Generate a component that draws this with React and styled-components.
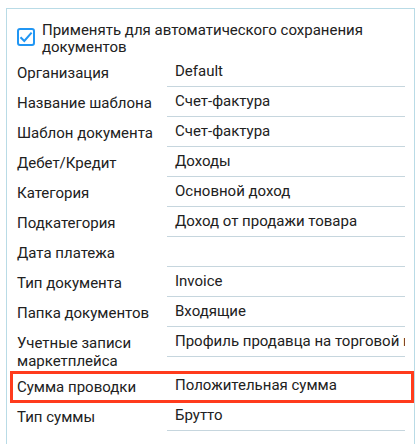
import React from "react";
import styled, {createGlobalStyle} from "styled-components";

const GlobalStyle = createGlobalStyle`
    body {
        margin: 0;
        background: #fff;
        font-family: Roboto, "Noto Sans", sans-serif;
        color: #212121;
    }
`;

const Panel = styled.div`
    box-sizing: border-box;
    margin: 8px 0 0 6px;
    width: 409px;
    height: 436px;
    border: 1px solid #b9dbe6;
    border-bottom: none;
    padding: 13px 0 0 0;
`;

const CheckRow = styled.label`
    display: flex;
    align-items: flex-start;
    gap: 7px;
    padding: 0 10px;
    font-size: 15px;
    line-height: 17px;
`;

const Box = styled.span`
    flex: none;
    width: 18px;
    height: 18px;
    margin-top: 6px;
    box-sizing: border-box;
    border: 2px solid #2196f3;
    border-radius: 3px;
    display: flex;
    align-items: center;
    justify-content: center;
`;

const Rows = styled.div`
    margin-top: 1px;
`;

const Row = styled.div`
    position: relative;
    display: flex;
    align-items: flex-start;
    padding: 0 9px 0 10px;
    font-size: 15px;
    line-height: 18px;

    ${(p) =>
        p.$marked &&
        `
        &::after {
            content: "";
            position: absolute;
            left: 3px;
            right: 0;
            top: 0;
            bottom: -2px;
            border: 3px solid #ff3b1c;
            pointer-events: none;
        }
    `}
`;

const Label = styled.div`
    flex: none;
    width: 150px;
    padding: 7px 0 1px;
`;

const Value = styled.div`
    flex: 1;
    min-width: 0;
    height: 30px;
    box-sizing: border-box;
    padding: 5px 0 0 8px;
    border-bottom: 1px solid #c6d6de;
    white-space: nowrap;
    overflow: hidden;
`;

const fields = [
    ["Организация", "Default"],
    ["Название шаблона", "Счет-фактура"],
    ["Шаблон документа", "Счет-фактура"],
    ["Дебет/Кредит", "Доходы"],
    ["Категория", "Основной доход"],
    ["Подкатегория", "Доход от продажи товара"],
    ["Дата платежа", ""],
    ["Тип документа", "Invoice"],
    ["Папка документов", "Входящие"],
    ["Учетные записи маркетплейса", "Профиль продавца на торговой площадке"],
    ["Сумма проводки", "Положительная сумма", true],
    ["Тип суммы", "Брутто"],
];

export default function App() {
    return (
        <>
            <GlobalStyle />
            <Panel>
                <CheckRow>
                    <Box>
                        <svg width="14" height="14" viewBox="0 0 14 14">
                            <path d="M1.5 7.2 L5.3 11 L12.6 2.6" fill="none" stroke="#2196f3" strokeWidth="2" />
                        </svg>
                    </Box>
                    <span>Применять для автоматического сохранения документов</span>
                </CheckRow>
                <Rows>
                    {fields.map(([label, value, marked]) => (
                        <Row key={label} $marked={marked}>
                            <Label>{label}</Label>
                            <Value>{value}</Value>
                        </Row>
                    ))}
                </Rows>
            </Panel>
        </>
    );
}
